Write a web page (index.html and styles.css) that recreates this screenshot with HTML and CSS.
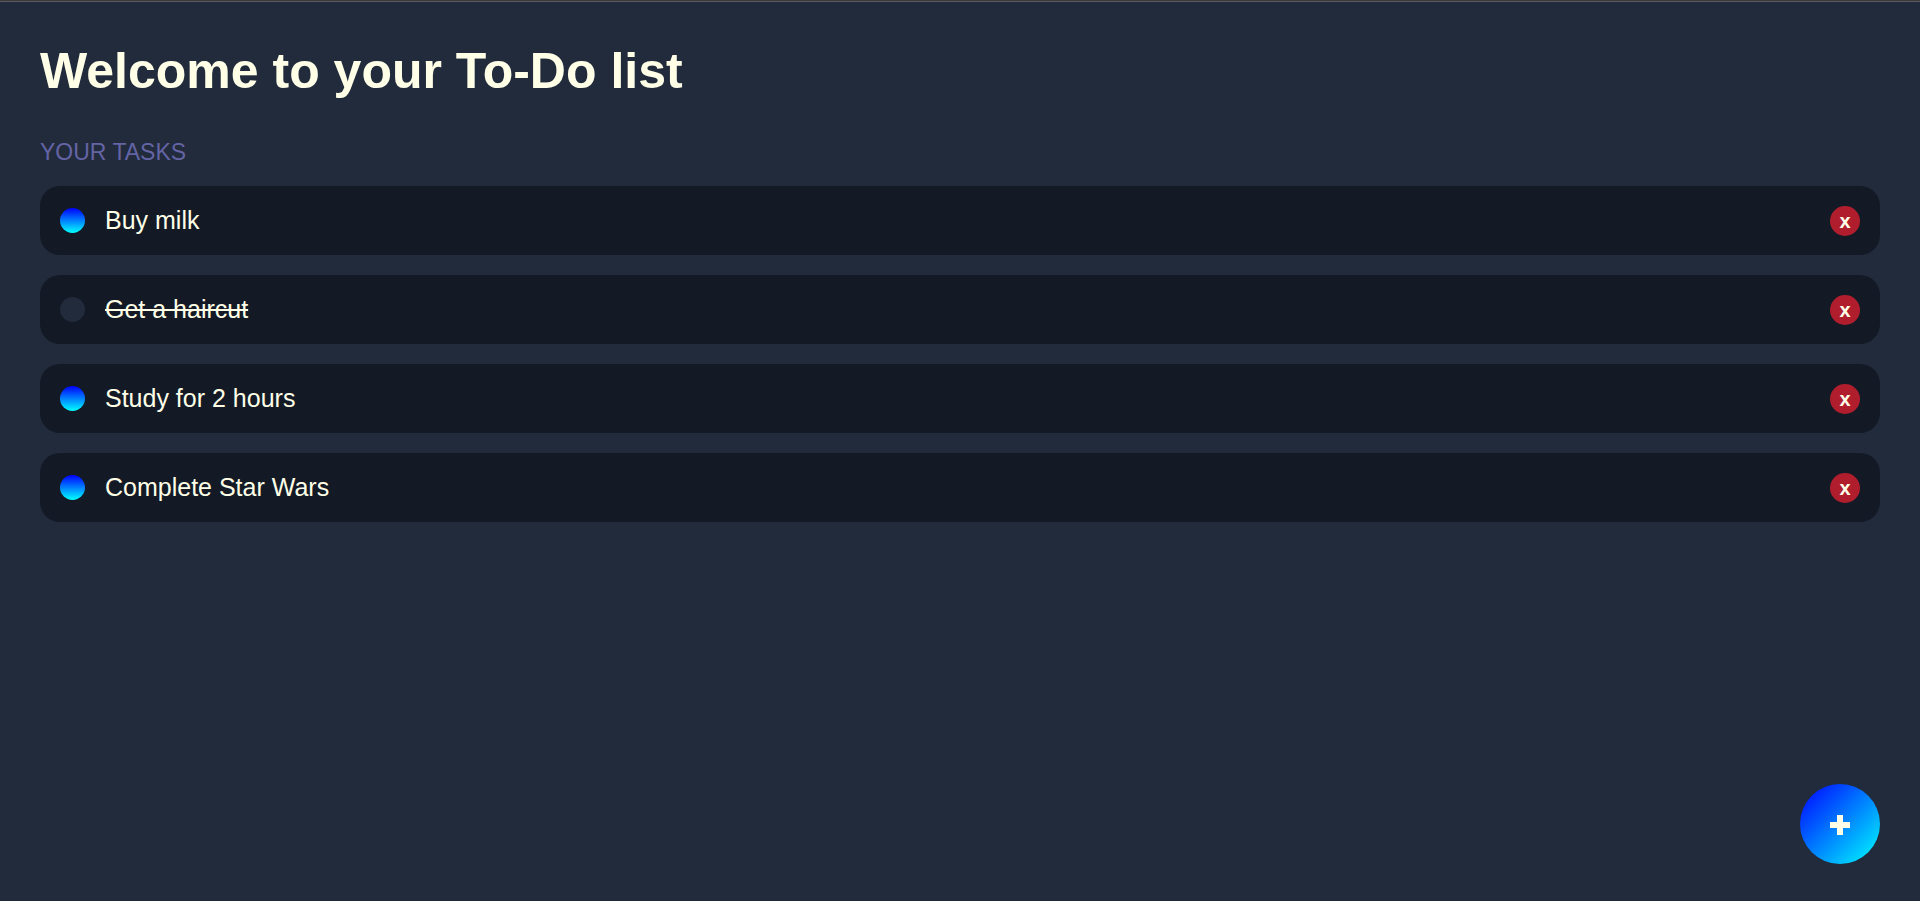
FILE: index.html
```html
<!DOCTYPE html>
<html lang="en">
<head>
<meta charset="utf-8">
<title>To-Do list</title>
<link rel="stylesheet" href="styles.css">
</head>
<body>
<main class="container">
  <h1 class="heading">Welcome to your To-Do list</h1>
  <h2 class="subheading">Your tasks</h2>
  <ul class="tasks">
    <li class="task">
      <input class="task-toggle" type="checkbox" id="task-1">
      <label class="task-name" for="task-1">Buy milk</label>
      <button class="task-delete" type="button">x</button>
    </li>
    <li class="task">
      <input class="task-toggle" type="checkbox" id="task-2" checked>
      <label class="task-name" for="task-2">Get a haircut</label>
      <button class="task-delete" type="button">x</button>
    </li>
    <li class="task">
      <input class="task-toggle" type="checkbox" id="task-3">
      <label class="task-name" for="task-3">Study for 2 hours</label>
      <button class="task-delete" type="button">x</button>
    </li>
    <li class="task">
      <input class="task-toggle" type="checkbox" id="task-4">
      <label class="task-name" for="task-4">Complete Star Wars</label>
      <button class="task-delete" type="button">x</button>
    </li>
  </ul>
</main>
<button class="add" type="button" aria-label="Add task">
  <svg class="add-icon" viewBox="0 0 20 22" aria-hidden="true"><path d="M7 2h6v7h7v6h-7v7H7v-7H0V9h7z"/></svg>
</button>
</body>
</html>
```
FILE: styles.css
```css
:root {
  --bg: #212b3c;
  --panel: #131a25;
  --text: #ffffe8;
}

* {
  box-sizing: border-box;
}

body {
  margin: 0;
  min-height: 100vh;
  border-top: 1px solid #3a383b;
  background: var(--bg);
  color: var(--text);
  font-family: "Liberation Sans", Arial, sans-serif;
}

.container {
  padding: 40px;
  border-top: 1px solid #5c5b60;
}

.heading {
  margin: 0;
  font-size: 50px;
  line-height: 58px;
}

.subheading {
  margin: 39px 0 21px;
  color: #6464a4;
  font-size: 23px;
  font-weight: 400;
  line-height: 26px;
  text-transform: uppercase;
}

.tasks {
  display: flex;
  flex-direction: column;
  gap: 20px;
  margin: 0;
  padding: 0;
  list-style: none;
}

.task {
  display: flex;
  align-items: center;
  gap: 20px;
  padding: 20px;
  border-radius: 20px;
  background: var(--panel);
}

.task-toggle {
  appearance: none;
  width: 25px;
  height: 25px;
  margin: 0;
  border-radius: 50%;
  background: linear-gradient(blue, aqua);
}

.task-toggle:checked {
  background: var(--bg);
}

.task-name {
  flex: 1;
  font-size: 25px;
  line-height: 29px;
}

.task-toggle:checked + .task-name {
  text-decoration: line-through;
  text-decoration-thickness: 2px;
}

.task-delete {
  width: 30px;
  height: 30px;
  margin: 0 0 -1px;
  padding: 0;
  border: 0;
  border-radius: 50%;
  background: #b01e2e;
  color: var(--text);
  font: bold 20px/28px "Liberation Sans", Arial, sans-serif;
}

.add {
  position: fixed;
  right: 40px;
  bottom: 37px;
  display: grid;
  place-items: center;
  width: 80px;
  height: 80px;
  padding: 0;
  border: 0;
  border-radius: 50%;
  background: linear-gradient(135deg, blue, aqua);
}

.add-icon {
  width: 20px;
  height: 22px;
  fill: var(--text);
}
```
